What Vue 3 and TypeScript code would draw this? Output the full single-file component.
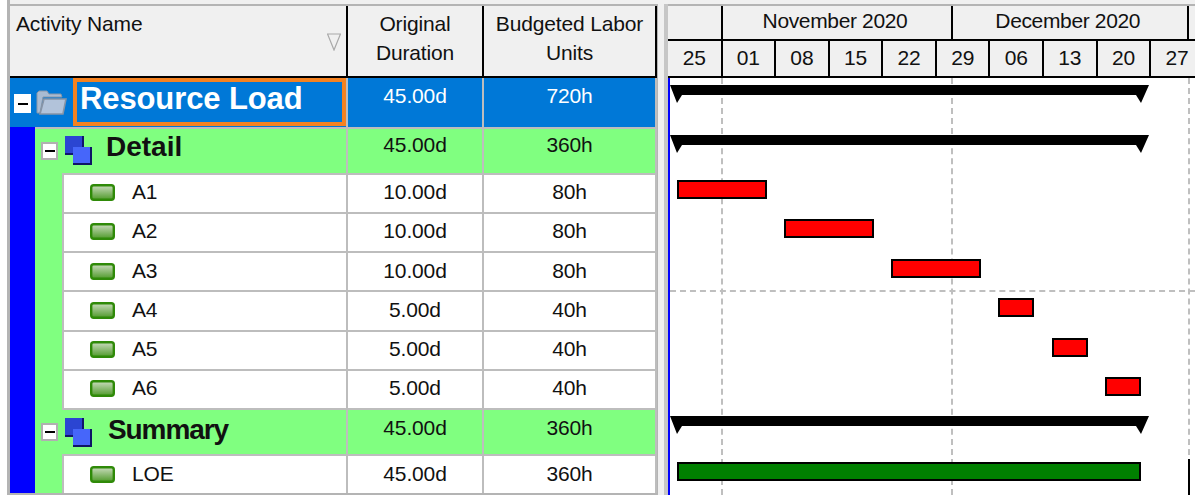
<script setup lang="ts">
interface Row { kind: 'root' | 'group' | 'task'; name: string; dur: string; units: string; mod?: string }
const rows: Row[] = [
  { kind: 'root', name: 'Resource Load', dur: '45.00d', units: '720h' },
  { kind: 'group', name: 'Detail', dur: '45.00d', units: '360h', mod: 'detail' },
  { kind: 'task', name: 'A1', dur: '10.00d', units: '80h' },
  { kind: 'task', name: 'A2', dur: '10.00d', units: '80h' },
  { kind: 'task', name: 'A3', dur: '10.00d', units: '80h' },
  { kind: 'task', name: 'A4', dur: '5.00d', units: '40h' },
  { kind: 'task', name: 'A5', dur: '5.00d', units: '40h' },
  { kind: 'task', name: 'A6', dur: '5.00d', units: '40h', mod: 'last' },
  { kind: 'group', name: 'Summary', dur: '45.00d', units: '360h', mod: 'summary' },
  { kind: 'task', name: 'LOE', dur: '45.00d', units: '360h' },
]
const weeks = ['25', '01', '08', '15', '22', '29', '06', '13', '20', '27']
const bars = [
  { x: 7, y: 102, w: 90, h: 19, c: '#ff0000' },
  { x: 114, y: 141, w: 90, h: 19, c: '#ff0000' },
  { x: 221, y: 181, w: 90, h: 19, c: '#ff0000' },
  { x: 328, y: 220, w: 36, h: 19, c: '#ff0000' },
  { x: 382, y: 260, w: 36, h: 19, c: '#ff0000' },
  { x: 435, y: 299, w: 36, h: 19, c: '#ff0000' },
  { x: 7, y: 384, w: 464, h: 19, c: '#008000' },
]
const summaries = [7, 57, 338]
const px = (n: number) => n + 'px'
</script>

<template>
  <div class="page">
    <div class="frame">
      <div class="table">
        <div class="thead">
          <div class="th name">Activity Name
            <svg class="sort" width="14" height="18" viewBox="0 0 14 18"><path d="M.5 1H13.5L7 17Z" fill="none" stroke="#a8a8a8" stroke-width="1.2"/></svg>
          </div>
          <div class="th dur">Original<br>Duration</div>
          <div class="th units">Budgeted Labor<br>Units</div>
        </div>
        <div class="tbody">
          <div v-for="r in rows" :key="r.name" class="row" :class="[r.kind, r.mod]">
            <div class="namecell">
              <span v-if="r.kind !== 'root'" class="band"></span>
              <span v-if="r.kind === 'task'" class="band2"></span>
              <div class="nameinner">
                <span v-if="r.kind !== 'task'" class="toggle"><i></i></span>
                <svg v-if="r.kind === 'root'" class="ico folder" width="31" height="28" viewBox="0 0 31 28">
                  <path d="M1 25V5l2-2h8l2 3h12l1 3H7L4 25Z" fill="#a9bbd2" stroke="#8a97a8"/>
                  <path d="M4 26 8 11h22l-3 15Z" fill="#b2c3da" stroke="#8794a6" stroke-width="1.6"/>
                </svg>
                <svg v-if="r.kind === 'group'" class="ico layers" width="27" height="29" viewBox="0 0 27 29">
                  <rect x="0" y="0" width="18" height="18" fill="#2b45d2"/>
                  <path d="M18 0V18H0" fill="none" stroke="#10166c" stroke-width="2"/>
                  <rect x="8" y="11" width="19" height="18" fill="#4666fa"/>
                  <path d="M26 11V28H8" fill="none" stroke="#0e1565" stroke-width="2"/>
                </svg>
                <svg v-if="r.kind === 'task'" class="ico taskico" width="25" height="17" viewBox="0 0 25 17">
                  <defs><linearGradient id="tg" x1="0" y1="0" x2="0" y2="1"><stop offset="0" stop-color="#cbdcbf"/><stop offset="1" stop-color="#4f9a2a"/></linearGradient></defs>
                  <rect x="1.2" y="1.2" width="22.6" height="14.6" rx="2.5" fill="url(#tg)" stroke="#2f8a08" stroke-width="2.4"/>
                </svg>
                <span class="label">{{ r.name }}</span>
              </div>
            </div>
            <div class="cell dur">{{ r.dur }}</div>
            <div class="cell units">{{ r.units }}</div>
          </div>
        </div>
      </div>
      <div class="splitter"></div>
      <div class="gantt">
        <div class="months">
          <div class="mon first"></div>
          <div class="mon nov">November 2020</div>
          <div class="mon dec">December 2020</div>
          <div class="mon rest"></div>
        </div>
        <div class="weeks">
          <div v-for="(w, i) in weeks" :key="i" class="wk">{{ w }}</div>
        </div>
        <div class="canvas">
          <span class="vline v1"></span>
          <span class="vline v2"></span>
          <span class="vline v3"></span>
          <span class="hline"></span>
          <span class="edge"></span>
          <div v-for="(b, i) in bars" :key="i" class="bar" :style="{ left: px(b.x), top: px(b.y), width: px(b.w), height: px(b.h), background: b.c }"></div>
          <svg v-for="y in summaries" :key="y" class="sum" :style="{ top: px(y) }" width="480" height="19" viewBox="0 0 480 19">
            <path d="M0 0H479L471 18L466 10H12L7 18Z" fill="#000"/>
          </svg>
        </div>
      </div>
    </div>
  </div>
</template>

<style scoped>
.page { width: 1195px; height: 499px; background: #fff; overflow: hidden; padding-left: 7px; box-sizing: border-box; font-family: "Liberation Sans", Arial, sans-serif; color: #111; }
.frame { display: flex; height: 495px; width: 1188px; box-sizing: border-box; border-left: 3px solid #b4b4b4; background: #f0f0f0; padding-top: 4px; }
.table { width: 647px; box-sizing: border-box; border-top: 2px solid #b4b4b4; border-bottom: 2px solid #b4b4b4; flex: none; overflow: hidden; }
.thead { height: 72px; display: flex; border-bottom: 2px solid #000; background: #f0f0f0; font-size: 21px; letter-spacing: -.15px; line-height: 29px; box-sizing: border-box; }
.th { box-sizing: border-box; text-align: center; padding-top: 3px; }
.th.name { width: 338px; border-right: 2px solid #000; text-align: left; padding-left: 6px; position: relative; }
.th.dur { width: 136px; border-right: 2px solid #000; }
.th.units { width: 173px; border-right: 2px solid #000; }
.sort { position: absolute; right: 5px; top: 27px; }
.tbody { background: #fff; }
.row { display: flex; box-sizing: border-box; font-size: 21px; letter-spacing: -.15px; }
.root { height: 48.5px; background: #0078d7; color: #fff; }
.group { background: #80ff80; }
.detail { height: 46px; }
.summary { height: 44px; }
.task { height: 39.25px; background: #fff; }
.task.last { height: 41.25px; }
.namecell { width: 336px; flex: none; display: flex; box-sizing: border-box; }
.band { width: 25px; background: #0000ff; flex: none; }
.band2 { width: 27px; background: #80ff80; flex: none; }
.nameinner { display: flex; align-items: center; flex: 1; min-width: 0; box-sizing: border-box; }
.task .nameinner { border-left: 2px solid #bdbdbd; }
.task .nameinner, .task .cell, .detail .nameinner, .detail .cell { border-top: 2px solid #bdbdbd; }
.task.last .nameinner, .task.last .cell { border-bottom: 2px solid #bdbdbd; }
.toggle { width: 17px; height: 18px; background: #fff; box-sizing: border-box; display: flex; align-items: center; justify-content: center; flex: none; }
.toggle i { width: 10px; height: 2px; background: #000; display: block; }
.group .toggle { border: 2px solid #b0b0b0; margin-left: 6px; }
.root .toggle { margin-left: 4px; margin-top: 3px; height: 19px; }
.root .ico { margin-left: 5px; }
.group .ico { margin-left: 7px; }
.task .ico { margin-left: 26px; margin-bottom: 1px; }
.root .label { border: 4px solid #f58220; box-sizing: border-box; width: 273.5px; height: 48px; margin-left: 6px; font-weight: 700; font-size: 31px; line-height: 33px; padding-left: 3px; letter-spacing: -.1px; }
.group .label { font-weight: 700; font-size: 28px; line-height: 30px; margin-bottom: 7px; letter-spacing: 0; }
.detail .label { margin-left: 14px; }
.summary .label { margin-left: 16px; margin-bottom: 5px; letter-spacing: -1.1px; }
.task .label { margin-left: 17px; margin-bottom: 2px; }
.cell { text-align: center; flex: none; box-sizing: border-box; padding-top: 4.5px; line-height: 26px; border-left: 2px solid #bdbdbd; }
.root .cell, .summary .cell { padding-top: 5px; }
.detail .cell { padding-top: 3.5px; }
.cell.dur { width: 136px; }
.cell.units { width: 175px; border-right: 2px solid #bdbdbd; }
.splitter { width: 11px; flex: none; border-left: 1px solid #b4b4b4; border-right: 4px solid #c6c6c6; box-sizing: border-box; }
.gantt { flex: 1; min-width: 0; border-top: 2px solid #b4b4b4; display: flex; flex-direction: column; background: #fff; position: relative; }
.gantt::before { content: ""; position: absolute; left: 0; top: 72px; bottom: 0; width: 2px; background: #0000ff; }
.months { height: 35px; display: flex; border-bottom: 2px solid #000; background: #f0f0f0; box-sizing: border-box; font-size: 21px; letter-spacing: -.35px; line-height: 30px; text-align: center; flex: none; }
.mon { box-sizing: border-box; flex: none; border-right: 2px solid #000; }
.mon.first { width: 54.5px; }
.mon.nov { width: 230px; padding-right: 3px; }
.mon.dec { width: 236.5px; padding-right: 4px; }
.mon.rest { border-right: 0; flex: 1; }
.weeks { height: 37px; display: flex; border-bottom: 2px solid #000; background: #f0f0f0; box-sizing: border-box; font-size: 21px; letter-spacing: -.15px; line-height: 34px; text-align: center; flex: none; }
.wk { width: 53.6px; flex: none; box-sizing: border-box; border-right: 2px solid #000; }
.wk:first-child { width: 54.5px; }
.canvas { position: relative; flex: 1; background: #fff; overflow: hidden; margin-left: 2px; }
.vline { position: absolute; top: 0; bottom: 0; width: 0; border-left: 2px dashed #bfbfbf; }
.v1 { left: 51px; }
.v2 { left: 281px; }
.v3 { left: 518px; }
.edge { position: absolute; left: 518px; top: 381px; bottom: 0; width: 2px; background: #000; }
.hline { position: absolute; left: 0; right: 0; top: 212px; border-top: 2px dashed #bfbfbf; }
.bar { position: absolute; box-sizing: border-box; border: 2px solid #000; }
.sum { position: absolute; left: 0; }
</style>
